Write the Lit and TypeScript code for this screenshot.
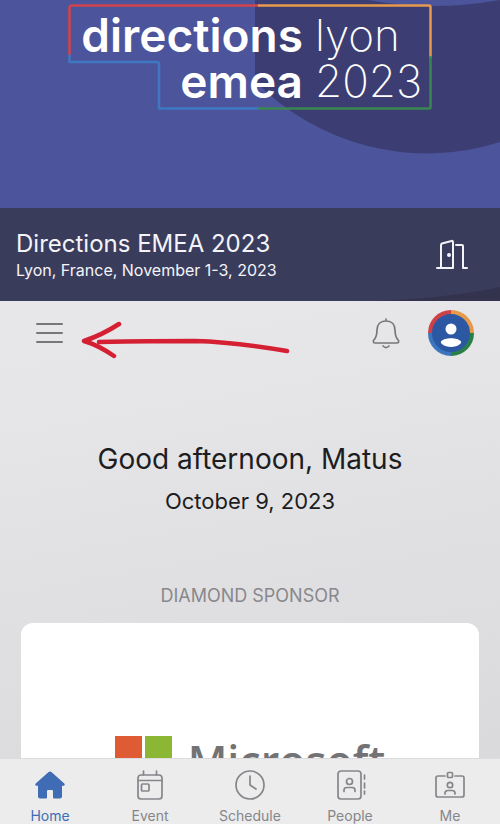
import { LitElement, html, svg, css } from "lit";
import { customElement } from "lit/decorators.js";

const homeIcon = svg`<svg viewBox="0 0 32 32" class="icon"><path fill="currentColor" stroke="none" d="M14.600 2Q16 .8 17.400 2L30.300 13.500Q31.500 15 30 15.800H28V26.500Q28 28.500 26 28.500H20Q19 28.500 19 27.500V21Q19 20 18 20H14Q13 20 13 21V27.500Q13 28.500 12 28.500H6Q4 28.500 4 26.500V15.800H2Q.5 15 1.700 13.500Z"/></svg>`;
const eventIcon = svg`<svg viewBox="0 0 32 32" class="icon"><rect x="4" y="5" width="24" height="24" rx="3"/><path d="M4 10.500H28M9.500 1V5M22.500 1V5"/><rect x="7.500" y="14" width="7.500" height="7" rx="1"/></svg>`;
const scheduleIcon = svg`<svg viewBox="0 0 32 32" class="icon"><circle cx="16" cy="15" r="14"/><path d="M16 6V15L22 19"/></svg>`;
const peopleIcon = svg`<svg viewBox="0 0 32 32" class="icon"><rect x="4" y="1" width="23" height="28" rx="3"/><circle cx="15.500" cy="11.500" r="3"/><path d="M10 21.500V20Q10 17.500 13 17.500H18Q21 17.500 21 20V21.500M30.500 5V9M30.500 13V18M30.500 21V24"/></svg>`;
const meIcon = svg`<svg viewBox="0 0 32 32" class="icon"><path d="M11 6H4Q2 6 2 8V25Q2 27 4 27H28Q30 27 30 25V8Q30 6 28 6H21"/><rect x="13.500" y="2.500" width="5" height="5" rx="1"/><circle cx="16" cy="15" r="2.700"/><path d="M11 24V23Q11 20.500 14 20.500H18Q21 20.500 21 23V24"/></svg>`;

const tabs = [
  { label: "Home", icon: homeIcon, active: true },
  { label: "Event", icon: eventIcon, active: false },
  { label: "Schedule", icon: scheduleIcon, active: false },
  { label: "People", icon: peopleIcon, active: false },
  { label: "Me", icon: meIcon, active: false },
];

@customElement("app-root")
export class AppRoot extends LitElement {
  static styles = css`
    :host {
      display: flex;
      flex-direction: column;
      height: 100vh;
      overflow: hidden;
      font-family: Inter, "Liberation Sans", sans-serif;
      color: #1d1d1f;
      background: linear-gradient(170deg, #e7e7e9 40%, #d8d8db);
    }
    * { box-sizing: border-box; }
    h1, h2, p { margin: 0; font-weight: 400; }
    button { border: 0; padding: 0; background: none; color: inherit; font: inherit; display: flex; }
    svg { display: block; fill: none; stroke-linecap: round; stroke-linejoin: round; }
    .hero { position: relative; flex: none; background: #4c549c; overflow: hidden; }
    .backdrop { position: absolute; inset: 0; width: 100%; height: 100%; }
    .banner { position: relative; height: 208px; display: flex; justify-content: center; padding-top: 4px; }
    .logo { position: relative; width: 364px; height: 106px; }
    .frame { position: absolute; inset: 0; }
    .words { position: relative; color: #fff; display: grid; grid-template-columns: 235px 1fr; column-gap: 12px; font-size: 44px; line-height: 46px; padding-top: 8px; }
    .bold { font-size: 46px; font-weight: 600; text-align: right; }
    .thin { font-weight: 200; }
    .event { position: relative; display: flex; align-items: center; justify-content: space-between; min-height: 93px; padding: 0 32px 0 16px; background: rgba(54, 54, 76, 0.8); color: #f4f4f8; }
    .title { font-size: 24px; line-height: 28px; padding-top: 3px; }
    .place { font-size: 16px; line-height: 24px; }
    .main { flex: 1; min-height: 0; overflow: hidden; }
    .bar { position: relative; display: flex; align-items: center; height: 64px; padding: 0 26px 0 36px; }
    .menu { margin-right: auto; }
    .bell { margin-right: 28px; }
    .scribble { position: absolute; left: 80px; top: 16px; }
    .greeting { text-align: center; padding-top: 74px; }
    .hello { font-size: 28px; line-height: 40px; }
    .date { font-size: 22px; line-height: 44px; }
    .sponsor { padding: 57px 21px 0; }
    .caption { text-align: center; font-size: 18px; line-height: 32px; color: #88888c; }
    .card { display: flex; justify-content: center; gap: 16px; margin-top: 11px; height: 240px; padding-top: 113px; border-radius: 12px; background: #fff; }
    .tiles { display: grid; grid-template-columns: 27px 27px; grid-auto-rows: 27px; gap: 3px; }
    .red { background: #de5b33; }
    .green { background: #8cb734; }
    .blue { background: #2f9fdc; }
    .yellow { background: #f3b62b; }
    .brand { font-family: "Open Sans", sans-serif; font-weight: 600; font-size: 43px; line-height: 50px; color: #737375; }
    .tabs { flex: none; display: grid; grid-template-columns: repeat(5, 1fr); height: 66px; border-top: 1px solid #dcdcde; background: #ececec; position: relative; }
    .tab { display: flex; flex-direction: column; align-items: center; gap: 6px; padding-top: 11px; color: #85868a; text-decoration: none; font-size: 14px; line-height: 16px; }
    .active { color: #3f6cb4; }
    .icon { width: 32px; height: 32px; stroke: currentColor; stroke-width: 1.7; }
    .ring { stroke-width: 4; stroke-linecap: butt; }
  `;

  render() {
    return html`
      <header class="hero">
        <svg class="backdrop" viewBox="0 0 500 301" preserveAspectRatio="xMidYMin slice">
          <path fill="#3c3e73" d="M255 0V81A240 240 0 0 0 500 142V0Z" />
          <path fill="#4c549c" d="M368 0Q432 12 500 0Z" />
          <path fill="#2a2a55" d="M374 301Q450 298 500 287V301Z" />
        </svg>
        <div class="banner">
          <div class="logo">
            <svg class="frame" width="364" height="106" viewBox="0 0 364 106" stroke-width="2.500">
              <path stroke="#3f78c2" d="M1.500 50V58H89Q91 58 91 60V104.500H191" />
              <path stroke="#cf444c" d="M191 1.500H4Q1.500 1.500 1.500 4V50" />
              <path stroke="#e79a4c" d="M191 1.500H361Q362.500 1.500 362.500 3V53" />
              <path stroke="#3a8650" d="M362.500 53V103Q362.500 104.500 361 104.500H191" />
            </svg>
            <div class="words">
              <span class="bold">directions</span><span class="thin">lyon</span>
              <span class="bold">emea</span><span class="thin">2023</span>
            </div>
          </div>
        </div>
        <div class="event">
          <div>
            <h1 class="title">Directions EMEA 2023</h1>
            <p class="place">Lyon, France, November 1-3, 2023</p>
          </div>
          <button aria-label="Exit event">
            <svg width="32" height="32" viewBox="0 0 32 32" stroke="#f4f4f8" stroke-width="2">
              <path d="M1 29H17V3Q17 1.500 15.500 2L6 4.500Q5 5 5 6V29M20 6H26Q27 6 27 7V29H31" />
              <circle cx="13" cy="16" r="1" fill="#f4f4f8" />
            </svg>
          </button>
        </div>
      </header>
      <main class="main">
        <div class="bar">
          <button class="menu" aria-label="Menu">
            <svg width="27" height="22" viewBox="0 0 27 22" stroke="#77777a" stroke-width="2"><path d="M1 2H26M1 11H26M1 20H26" /></svg>
          </button>
          <svg class="scribble" width="212" height="44" viewBox="0 0 212 44" stroke="#d51f33" stroke-width="4.500">
            <path d="M39 7Q22 18 4 24Q18 28 34 39M19 25Q70 24 115 24Q155 25 207 34" />
          </svg>
          <button class="bell" aria-label="Notifications">
            <svg width="28" height="32" viewBox="0 0 28 32" stroke="#77777a" stroke-width="1.700">
              <path d="M14 2V4M14 4C8 4 5 8 5 13C5 20 3 22 1.500 23.500Q1 26 3 26H25Q27 26 26.500 23.500C25 22 23 20 23 13C23 8 20 4 14 4ZM11 29Q14 32 17 29" />
            </svg>
          </button>
          <button aria-label="Profile">
            <svg width="46" height="46" viewBox="0 0 46 46">
              <circle cx="23" cy="23" r="20" fill="#2c58a3" />
              <g class="ring">
                <path stroke="#cf4146" d="M2 23A21 21 0 0 1 23 2" />
                <path stroke="#e59a49" d="M23 2A21 21 0 0 1 44 23" />
                <path stroke="#298047" d="M44 23A21 21 0 0 1 23 44" />
                <path stroke="#3b75bd" d="M23 44A21 21 0 0 1 2 23" />
              </g>
              <circle cx="23" cy="19" r="5.500" fill="#fff" />
              <path fill="#fff" d="M13 31.500C16 27 30 27 33 31.500C34 33 30 37 23 37S12 33 13 31.500Z" />
            </svg>
          </button>
        </div>
        <section class="greeting">
          <h2 class="hello">Good afternoon, Matus</h2>
          <p class="date">October 9, 2023</p>
        </section>
        <section class="sponsor">
          <h2 class="caption">DIAMOND SPONSOR</h2>
          <div class="card">
            <div class="tiles"><i class="red"></i><i class="green"></i><i class="blue"></i><i class="yellow"></i></div>
            <span class="brand">Microsoft</span>
          </div>
        </section>
      </main>
      <nav class="tabs">
        ${tabs.map((t) => html`<a href="#${t.label.toLowerCase()}" class=${t.active ? "tab active" : "tab"}>${t.icon}<span>${t.label}</span></a>`)}
      </nav>
    `;
  }
}
